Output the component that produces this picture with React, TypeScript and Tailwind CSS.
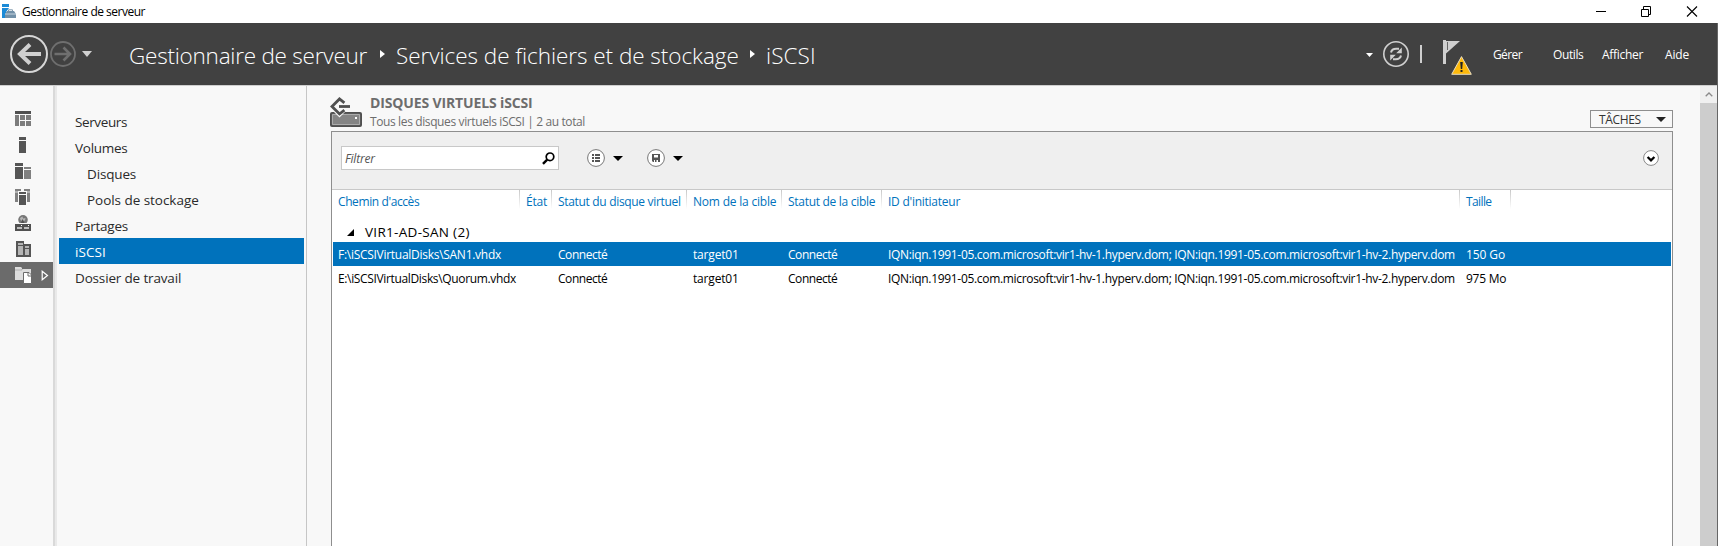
import React from 'react';
import clsx from 'clsx';

const BackForward = () => (
  <svg className="ml-[10px] h-[40px] w-[84px]" viewBox="10 34 84 40" fill="none">
    <circle cx="29" cy="54" r="18" stroke="#d6d6d6" strokeWidth="2" />
    <path d="M41 54H19.5M30 44.5L20 54L30 63.5" stroke="#d0d0d0" strokeWidth="4" />
    <circle cx="63" cy="54" r="12" stroke="#6f6f6f" strokeWidth="1.8" />
    <path d="M54.5 54H69.5M63.5 47.5L70 54L63.5 60.5" stroke="#6f6f6f" strokeWidth="2.6" />
    <path d="M82 51H92L87 57Z" fill="#d0d0d0" />
  </svg>
);

const Crumb = ({ className }: { className: string }) => (
  <svg className={clsx('h-[8px] w-[5px] shrink-0', className)} viewBox="0 0 5 8">
    <path d="M0 0L5 4L0 8Z" fill="#fff" />
  </svg>
);

const Caret = ({ className }: { className: string }) => (
  <svg className={className} viewBox="0 0 10 5" preserveAspectRatio="none">
    <path d="M0 0H10L5 5Z" fill="currentColor" />
  </svg>
);

const Refresh = () => (
  <svg className="ml-[10px] size-[26px]" viewBox="0 0 26 26" fill="none">
    <circle cx="13" cy="13" r="12.2" stroke="#cfcfcf" strokeWidth="1.6" />
    <path d="M8 11.5C8.6 8.8 11 7.8 13.2 7.8H16M18 14.5C17.4 17.2 15 18.2 12.8 18.2H10" stroke="#cfcfcf" strokeWidth="2" />
    <path d="M18.8 6.5V12.2H13.2Z M7.2 19.5V13.8H12.8Z" fill="#cfcfcf" />
  </svg>
);

const FlagWarning = () => (
  <svg className="ml-[21px] h-[36px] w-[30px]" viewBox="1443 40 30 36">
    <path d="M1443 40H1446V64H1443Z" fill="#cfcfcf" />
    <path d="M1446 41H1460L1446 53.5Z" fill="#cfcfcf" />
    <path d="M1447.5 42V50" stroke="#666" strokeWidth="1" />
    <path d="M1461.5 56.6L1471.3 74.3H1451.7Z" fill="#fdb90b" stroke="#e8dcc0" strokeWidth="1" strokeLinejoin="round" />
    <path d="M1460.2 62H1462.8L1462.2 69H1460.8Z M1460.5 70H1462.5V72H1460.5Z" fill="#222" />
  </svg>
);

const railIcons = [
  <g key="dashboard">
    <path d="M0 0H16V3H0Z" fill="#505050" />
    <path d="M0 4H4V15H0Z M5 4H10V9H5Z M11 4H16V9H11Z M5 10H10V15H5Z M11 10H16V15H11Z" fill="#7c7c7c" />
  </g>,
  <path key="local" d="M4 0H11V3H4Z M4 4H11V16H4Z" fill="#555" />,
  <g key="all">
    <path d="M0 0H8V3H0Z M0 4H8V16H0Z" fill="#555" />
    <path d="M9 4H16V6H9Z M9 7H16V16H9Z" fill="#808080" />
  </g>,
  <g key="cluster">
    <path d="M0 0H6V2H3V13H0Z M9 0H15V13H12V2H9Z" fill="#808080" />
    <path d="M0 3H3M12 3H15" stroke="#f8f8f8" strokeWidth="0.8" />
    <path d="M4 3H11V5H4Z M4 6H11V16H4Z" fill="#555" />
  </g>,
  <g key="iis">
    <circle cx="8" cy="4.8" r="4.8" fill="#777" />
    <path d="M5 3L7.5 1.5L8 3.5L10.5 3L10 5.5L7 6L5.5 5Z" fill="#b5b5b5" />
    <path d="M7.5 4L9.5 8H6Z" fill="#505050" />
    <path d="M0 8H16V9H0Z" fill="#f8f8f8" />
    <path d="M0 9H16V16H0Z" fill="#505050" />
    <path d="M2 12H7V14H2Z M9 12H14V14H9Z" fill="#bdbdbd" />
    <path d="M6 10H7V11H6Z M13 10H14V11H13Z" fill="#fff" />
  </g>,
  <g key="hyperv">
    <path d="M1 0H9V3H16V16H1Z" fill="#555" />
    <path d="M3 2H8V4H3Z M3 5H8V14H3Z M10 5H14V7H10Z M10 8H14V14H10Z" fill="#b5b5b5" />
  </g>,
  <g key="storage">
    <path d="M0 0H6L7 1V2H16V13H0Z" fill="#dcdcdc" />
    <path d="M0 3H7V2" stroke="#999" strokeWidth="0.6" fill="none" />
    <path d="M8.5 5.5H14L16.5 8V16.5H8.5Z" fill="#fff" stroke="#6b6b6b" strokeWidth="1" />
    <path d="M13 6V9H16" stroke="#6b6b6b" strokeWidth="1" fill="none" />
  </g>,
];

const navItems = [
  { label: 'Serveurs', style: 'pl-[16px] tracking-[-0.38px]' },
  { label: 'Volumes', style: 'pl-[16px] tracking-[-0.27px]' },
  { label: 'Disques', style: 'pl-[28px] tracking-[-0.16px]' },
  { label: 'Pools de stockage', style: 'pl-[28px] tracking-[-0.04px]' },
  { label: 'Partages', style: 'pl-[16px] tracking-[-0.22px]' },
  { label: 'iSCSI', style: 'pl-[16px] tracking-[0.1px] bg-[#0072bc] text-white' },
  { label: 'Dossier de travail', style: 'pl-[16px] tracking-[-0.16px]' },
];

const columns = [
  { label: "Chemin d'accès", style: 'tracking-[-0.4px]' },
  { label: 'État', style: 'tracking-[-0.2px]' },
  { label: 'Statut du disque virtuel', style: 'tracking-[-0.32px]' },
  { label: 'Nom de la cible', style: 'tracking-[-0.2px]' },
  { label: 'Statut de la cible', style: 'tracking-[-0.29px]' },
  { label: "ID d'initiateur", style: 'tracking-[-0.25px]' },
  { label: 'Taille', style: 'tracking-[-0.6px]' },
];

const initiators =
  'IQN:iqn.1991-05.com.microsoft:vir1-hv-1.hyperv.dom; IQN:iqn.1991-05.com.microsoft:vir1-hv-2.hyperv.dom';

const disks = [
  { path: 'F:\\iSCSIVirtualDisks\\SAN1.vhdx', size: '150 Go', selected: true },
  { path: 'E:\\iSCSIVirtualDisks\\Quorum.vhdx', size: '975 Mo', selected: false },
];

const gridCols = 'grid grid-cols-[188px_32px_135px_95px_100px_578px_51px]';

const TitleBar = () => (
  <div className="flex h-[23px] shrink-0 items-center bg-white text-black">
    <svg className="ml-[2px] h-[15px] w-[14px]" viewBox="0 0 14 15">
      <path d="M0 0H7V3H0Z M0 4H4V14H0Z" fill="#1b8ad6" />
      <path d="M4 4H7L4 8Z" fill="#1b8ad6" />
      <path d="M6.5 7V5.8H10.5V7" stroke="#7f99ad" strokeWidth="1" fill="none" />
      <path d="M5 7H12L14 10V14H3V10Z" fill="#7391a8" />
      <path d="M3 10H14" stroke="#dce6ee" strokeWidth="0.8" />
    </svg>
    <span className="ml-[6px] tracking-[-0.5px]">Gestionnaire de serveur</span>
    <svg className="mr-[20px] ml-auto h-[12px] w-[102px]" viewBox="0 0 102 12" fill="none" stroke="#000">
      <path d="M0 5.5H10" />
      <path d="M45.5 3.5H52.5V10.5H45.5Z M47.5 3.5V0.5H54.5V8.5H52.5" />
      <path d="M91 0.5L101 10.5M101 0.5L91 10.5" strokeWidth="1.1" />
    </svg>
  </div>
);

const Header = () => (
  <header className="flex h-[62px] shrink-0 items-center bg-[#414141] text-white">
    <BackForward />
    <div className="flex items-center text-[22.5px] leading-[30px] font-light whitespace-nowrap">
      <span className="ml-[35px] w-[239px] pt-[3px] tracking-[-0.23px]">Gestionnaire de serveur</span>
      <Crumb className="ml-[12px]" />
      <span className="ml-[11px] w-[343px] pt-[3px] tracking-[-0.04px]">Services de fichiers et de stockage</span>
      <Crumb className="ml-[11px]" />
      <span className="ml-[11px] pt-[3px] tracking-[0.1px]">iSCSI</span>
    </div>
    <div className="ml-auto flex w-[351px] items-center">
      <Caret className="mt-[2px] h-[4px] w-[7px]" />
      <Refresh />
      <span className="ml-[11px] h-[18px] w-[2px] bg-[#cfcfcf]" />
      <div className="pt-[7px]">
        <FlagWarning />
      </div>
      <nav className="flex pt-[2px]">
        <span className="ml-[20px] w-[60px] tracking-[-0.6px]">Gérer</span>
        <span className="w-[49px] tracking-[-0.4px]">Outils</span>
        <span className="w-[63px] tracking-[-0.3px]">Afficher</span>
        <span className="tracking-[-0.15px]">Aide</span>
      </nav>
    </div>
  </header>
);

const Rail = () => (
  <aside className="flex w-[53px] shrink-0 flex-col pt-[20px]">
    {railIcons.map((icon, i) => (
      <div key={i} className={clsx('flex h-[26px] shrink-0 items-center pl-[15px]', i === 6 && 'bg-[#6b6b6b]')}>
        <svg className="h-[17px] w-[17px] shrink-0" viewBox="0 0 17 17">
          {icon}
        </svg>
        {i === 6 && (
          <svg className="ml-[9px] h-[11px] w-[8px]" viewBox="0 0 8 11">
            <path d="M1.2 1.2L6.5 5.5L1.2 9.8Z" fill="none" stroke="#fff" strokeWidth="1.2" />
          </svg>
        )}
      </div>
    ))}
  </aside>
);

const Sidebar = () => (
  <nav className="w-[250px] shrink-0 border-r border-[#c6c6c6] pt-[22px] pr-[2px] pl-[2px] text-[13.5px] text-[#2a2a2a]">
    {navItems.map((n) => (
      <div key={n.label} className={clsx('h-[26px] pt-px leading-[27px]', n.style)}>
        {n.label}
      </div>
    ))}
  </nav>
);

const Toolbar = () => (
  <div className="flex h-[58px] shrink-0 border-b border-[#c8c8c8] bg-[#efefef] pt-[14px] pl-[9px]">
    <div className="flex h-[24px] w-[218px] items-center border border-[#c8c8c8] bg-white pl-[3px]">
      <span className="pt-px tracking-[-0.2px] text-[#555] italic">Filtrer</span>
      <svg className="mr-[3px] ml-auto size-[13px]" viewBox="0 0 13 13" fill="none" stroke="#000">
        <circle cx="8" cy="4.8" r="3.8" strokeWidth="1.7" />
        <path d="M5.2 7.6L1 11.8" strokeWidth="2.4" />
      </svg>
    </div>
    <svg className="mt-[3px] ml-[28px] size-[18px]" viewBox="0 0 18 18">
      <circle cx="9" cy="9" r="8.4" fill="#fff" stroke="#777" />
      <path d="M5 5H7V7H5Z M5 8H7V10H5Z M5 11H7V13H5Z M8 5H13V7H8Z M8 8H13V10H8Z M8 11H13V13H8Z" fill="#555" />
    </svg>
    <Caret className="mt-[10px] ml-[8px] h-[5px] w-[10px] text-black" />
    <svg className="mt-[3px] ml-[24px] size-[18px]" viewBox="0 0 18 18">
      <circle cx="9" cy="9" r="8.4" fill="#fff" stroke="#777" />
      <path d="M5 5H13V13H6L5 12Z" fill="#555" />
      <path d="M7 6H11V8.5H7Z M7 11H8V13H7Z M9.5 11H11V13H9.5Z" fill="#fff" />
    </svg>
    <Caret className="mt-[10px] ml-[8px] h-[5px] w-[10px] text-black" />
    <svg className="mt-[4px] mr-[13px] ml-auto size-[16px]" viewBox="0 0 16 16">
      <circle cx="8" cy="8" r="7.4" fill="#fff" stroke="#888" />
      <path d="M4.6 7L8 10.4L11.4 7" fill="none" stroke="#000" strokeWidth="2.2" />
    </svg>
  </div>
);

const DiskTable = () => (
  <div className="flex flex-col text-black">
    <div className={clsx(gridCols, 'h-[19px] text-[#0072bc]')}>
      {columns.map((c) => (
        <div key={c.label} className="flex justify-between pl-[6px] leading-[24px] whitespace-nowrap">
          <span className={c.style}>{c.label}</span>
          <span className="h-[19px] w-px shrink-0 bg-linear-to-b from-[#c8c8c8] to-white" />
        </div>
      ))}
    </div>
    <div className="flex h-[33px] items-center pt-[13px] pl-[15px]">
      <svg className="size-[7px]" viewBox="0 0 7 7">
        <path d="M7 0V7H0Z" fill="#000" />
      </svg>
      <span className="ml-[11px] text-[13.5px] leading-[19px] tracking-[0.3px]">VIR1-AD-SAN (2)</span>
    </div>
    {disks.map((d) => (
      <div
        key={d.path}
        className={clsx(gridCols, 'mr-px ml-px h-[24px] leading-[26px] whitespace-nowrap', d.selected && 'bg-[#0072bc] text-white')}
      >
        <span className={clsx('pl-[5px]', d.selected ? 'tracking-[-0.28px]' : 'tracking-[-0.35px]')}>{d.path}</span>
        <span />
        <span className="pl-[5px] tracking-[-0.45px]">Connecté</span>
        <span className="pl-[5px] tracking-[-0.18px]">target01</span>
        <span className="pl-[5px] tracking-[-0.45px]">Connecté</span>
        <span className="pl-[5px] tracking-[-0.32px]">{initiators}</span>
        <span className={clsx('pl-[5px]', d.selected ? 'tracking-[-0.1px]' : 'tracking-[-0.25px]')}>{d.size}</span>
      </div>
    ))}
  </div>
);

const Content = () => (
  <main className="flex min-w-0 flex-1 flex-col pr-[27px] pl-[24px]">
    <div className="flex h-[45px] shrink-0">
      <svg className="mt-[11px] -ml-px h-[31px] w-[32px]" viewBox="0 0 32 31">
        <path d="M2 15H30Q32 15 32 17V28Q32 30 30 30H2Q0 30 0 28V17Q0 15 2 15Z" fill="#505050" />
        <path d="M2.4 17.4H29.6V27.6H2.4Z" fill="#858585" stroke="#c4c4c4" strokeWidth="0.8" />
        <path d="M25 20H27V22H25Z" fill="#fff" />
        <path d="M3 14L9.5 20.5L16 14Z" fill="#f8f8f8" />
        <path d="M14.4 5.8L9.5 1.9L2 9.5L9.5 17L14.4 13.2" fill="none" stroke="#505050" strokeWidth="2.8" />
        <path d="M9 9.5H20" stroke="#505050" strokeWidth="2.8" />
      </svg>
      <div className="ml-[8px] pt-[8px] text-[#6d6d6d]">
        <div className="text-[14px] leading-[17px] font-bold tracking-[-0.14px]">DISQUES VIRTUELS iSCSI</div>
        <div className="pt-px leading-[20px] tracking-[-0.38px]">Tous les disques virtuels iSCSI | 2 au total</div>
      </div>
      <div className="mt-[24px] ml-auto flex h-[18px] w-[83px] items-center border border-[#8e8e8e] pl-[8px] text-[#333]">
        <span className="pt-px leading-[18px] tracking-[-0.35px]">TÂCHES</span>
        <Caret className="mr-[6px] ml-auto h-[5px] w-[10px] text-[#222]" />
      </div>
    </div>
    <section className="flex min-h-0 flex-1 flex-col border border-b-0 border-[#8e8e8e] bg-white">
      <Toolbar />
      <DiskTable />
    </section>
  </main>
);

export default function App() {
  return (
    <div className="flex h-[546px] w-[1718px] flex-col overflow-hidden bg-[#f8f8f8] font-['Open_Sans','Noto_Sans',sans-serif] text-[12px] leading-[18px]">
      <TitleBar />
      <div className="flex min-h-0 flex-1 flex-col border-r border-[#666]">
        <Header />
        <div className="flex min-h-0 flex-1 border-t border-[#cfcfcf]">
          <Rail />
          <div className="w-[2px] shrink-0 bg-[#d9d9d9]" />
          <div className="w-[2px] shrink-0 bg-[#e9e9e9]" />
          <Sidebar />
          <Content />
          <div className="flex w-[17px] shrink-0 flex-col bg-[#cdcdcd]">
            <div className="flex h-[17px] items-center justify-center bg-[#f0f0f0]">
              <svg className="h-[5px] w-[8px]" viewBox="0 0 8 5">
                <path d="M0.7 4.3L4 1L7.3 4.3" fill="none" stroke="#8a8a8a" strokeWidth="1.3" />
              </svg>
            </div>
          </div>
        </div>
      </div>
    </div>
  );
}
